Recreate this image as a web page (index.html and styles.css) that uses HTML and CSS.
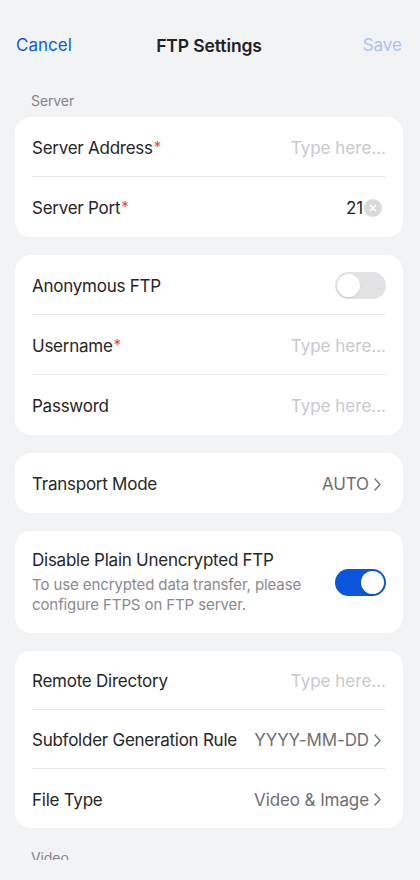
FILE: index.html
```html
<!DOCTYPE html>
<html lang="en">
<head>
<meta charset="utf-8">
<meta name="viewport" content="width=device-width, initial-scale=1">
<title>FTP Settings</title>
<link rel="stylesheet" href="styles.css">
</head>
<body>
<div class="screen">
  <header class="nav">
    <span class="nav-btn cancel">Cancel</span>
    <span class="nav-title">FTP Settings</span>
    <span class="nav-btn save">Save</span>
  </header>

  <div class="section-label">Server</div>
  <section class="card">
    <div class="row">
      <span class="label">Server Address<span class="req">*</span></span>
      <span class="placeholder">Type here...</span>
    </div>
    <div class="row">
      <span class="label">Server Port<span class="req">*</span></span>
      <span class="value dark">21<span class="clear"><svg viewBox="0 0 18 18" width="18" height="18"><circle cx="9" cy="9" r="9" fill="#d9d9db"/><path d="M6.3 6.3 L11.7 11.7 M11.7 6.3 L6.3 11.7" stroke="#fff" stroke-width="1.5" stroke-linecap="round"/></svg></span></span>
    </div>
  </section>

  <section class="card">
    <div class="row">
      <span class="label">Anonymous FTP</span>
      <span class="toggle"><span class="knob"></span></span>
    </div>
    <div class="row">
      <span class="label">Username<span class="req">*</span></span>
      <span class="placeholder">Type here...</span>
    </div>
    <div class="row">
      <span class="label">Password</span>
      <span class="placeholder">Type here...</span>
    </div>
  </section>

  <section class="card">
    <div class="row">
      <span class="label">Transport Mode</span>
      <span class="value">AUTO<svg class="chev" viewBox="0 0 7 13" width="7" height="13"><path d="M1 1 L6 6.5 L1 12" fill="none" stroke="#6e6e73" stroke-width="1.3" stroke-linecap="round" stroke-linejoin="round"/></svg></span>
    </div>
  </section>

  <section class="card">
    <div class="row tall">
      <div class="text-block">
        <div class="label">Disable Plain Unencrypted FTP</div>
        <div class="desc">To use encrypted data transfer, please configure FTPS on FTP server.</div>
      </div>
      <span class="toggle on"><span class="knob"></span></span>
    </div>
  </section>

  <section class="card">
    <div class="row r59">
      <span class="label">Remote Directory</span>
      <span class="placeholder">Type here...</span>
    </div>
    <div class="row r59">
      <span class="label">Subfolder Generation Rule</span>
      <span class="value">YYYY-MM-DD<svg class="chev" viewBox="0 0 7 13" width="7" height="13"><path d="M1 1 L6 6.5 L1 12" fill="none" stroke="#6e6e73" stroke-width="1.3" stroke-linecap="round" stroke-linejoin="round"/></svg></span>
    </div>
    <div class="row r59">
      <span class="label">File Type</span>
      <span class="value">Video &amp; Image<svg class="chev" viewBox="0 0 7 13" width="7" height="13"><path d="M1 1 L6 6.5 L1 12" fill="none" stroke="#6e6e73" stroke-width="1.3" stroke-linecap="round" stroke-linejoin="round"/></svg></span>
    </div>
  </section>

  <div class="section-label video">Video</div>
</div>
</body>
</html>
```

FILE: styles.css
```css
* { box-sizing: border-box; }

html, body {
  margin: 0;
  padding: 0;
  background: #f2f3f5;
}

body {
  font-family: Inter, "Noto Sans", "Liberation Sans", sans-serif;
  color: #1c1c1e;
  -webkit-font-smoothing: antialiased;
}

.screen {
  height: 860px;
  overflow: hidden;
  padding: 23px 17px 0 15px;
}

.nav {
  height: 44px;
  display: grid;
  grid-template-columns: 1fr auto 1fr;
  align-items: center;
  padding: 0 1px;
}

.nav-btn {
  font-size: 17px;
}

.cancel { color: #0b5ce3; justify-self: start; }
.save { color: #a9c3f2; justify-self: end; }

.nav-title {
  font-size: 17.5px;
  font-weight: 600;
  color: #222;
  letter-spacing: -0.1px;
}

.section-label {
  font-size: 14px;
  line-height: 20px;
  color: #85858a;
  padding-left: 16px;
  margin-top: 24px;
  margin-bottom: 6px;
  letter-spacing: -0.1px;
}

.section-label.video {
  margin-top: 20px;
}

.card {
  background: #fff;
  border-radius: 16px;
  padding: 0 17px;
  margin-bottom: 18px;
}

.row {
  height: 60px;
  padding-top: 2px;
  display: flex;
  align-items: center;
  justify-content: space-between;
  border-bottom: 1px solid #e8e8ea;
}

.row.r59 { height: 59px; }

.row:last-child { border-bottom: none; }

.label {
  font-size: 17px;
  color: #262628;
  letter-spacing: -0.25px;
}

.req {
  color: #ee4444;
  font-size: 15px;
  position: relative;
  top: -2px;
  margin-left: 1px;
}

.placeholder {
  font-size: 17px;
  color: #c9c9cc;
  letter-spacing: 0;
}

.value {
  display: flex;
  align-items: center;
  font-size: 17px;
  color: #6f6f73;
  letter-spacing: -0.1px;
}

.value.dark {
  color: #222;
}

.chev {
  margin-left: 5px;
  margin-right: 5px;
}

.clear {
  display: flex;
  margin-left: 1px;
  margin-right: 4px;
}

.toggle {
  width: 51px;
  height: 27px;
  border-radius: 14px;
  background: #e3e3e5;
  position: relative;
  flex-shrink: 0;
}

.knob {
  position: absolute;
  top: 2px;
  left: 2px;
  width: 23px;
  height: 23px;
  border-radius: 50%;
  background: #fff;
  box-shadow: 0 1px 2px rgba(0,0,0,0.12);
}

.toggle.on {
  background: #0a55dc;
}

.toggle.on .knob {
  left: 26px;
}

.row.tall {
  height: 102px;
  padding-top: 0;
}

.text-block {
  width: 290px;
}

.desc {
  font-size: 15px;
  line-height: 20px;
  color: #8a8a8e;
  margin-top: 5px;
  letter-spacing: -0.1px;
}
```
